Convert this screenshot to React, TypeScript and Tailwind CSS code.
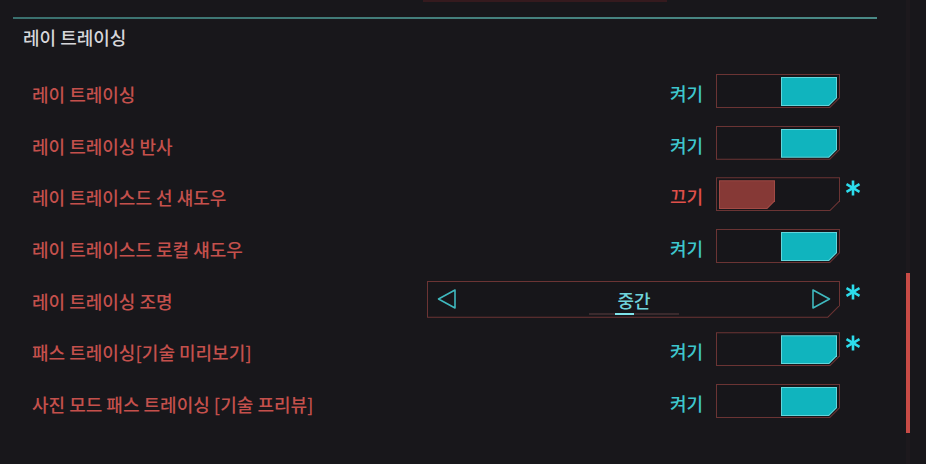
import React from 'react';

const font = { fontFamily: '"Noto Sans CJK KR", "Noto Sans", sans-serif' };

type Row =
  | { label: string; kind: 'toggle'; on: boolean; star?: boolean }
  | { label: string; kind: 'select'; value: string; star?: boolean };

const rows: Row[] = [
  { label: '레이 트레이싱', kind: 'toggle', on: true },
  { label: '레이 트레이싱 반사', kind: 'toggle', on: true },
  { label: '레이 트레이스드 선 섀도우', kind: 'toggle', on: false, star: true },
  { label: '레이 트레이스드 로컬 섀도우', kind: 'toggle', on: true },
  { label: '레이 트레이싱 조명', kind: 'select', value: '중간', star: true },
  { label: '패스 트레이싱[기술 미리보기]', kind: 'toggle', on: true, star: true },
  { label: '사진 모드 패스 트레이싱 [기술 프리뷰]', kind: 'toggle', on: true },
];

function Star() {
  return (
    <svg
      className="absolute left-full top-[3px] ml-[5px]"
      width="16"
      height="16"
      viewBox="0 0 16 16"
      stroke="#2ddcec"
      strokeWidth="2.6"
      strokeLinecap="butt"
    >
      <line x1="8" y1="0.5" x2="8" y2="15.5" />
      <line x1="1.5" y1="4.2" x2="14.5" y2="11.8" />
      <line x1="1.5" y1="11.8" x2="14.5" y2="4.2" />
    </svg>
  );
}

function Toggle({ on }: { on: boolean }) {
  return (
    <div className="w-[124px] h-[34px] p-px bg-[#6b3434] [clip-path:polygon(0_0,100%_0,100%_calc(100%-10px),calc(100%-10px)_100%,0_100%)]">
      <div
        className={
          'w-full h-full flex p-[2px] pb-[1px] bg-[#17161a] [clip-path:polygon(0_0,100%_0,100%_calc(100%-9.5px),calc(100%-9.5px)_100%,0_100%)] ' +
          (on ? 'justify-end' : 'justify-start')
        }
      >
        <div
          className={
            'w-[56px] h-full p-px [clip-path:polygon(0_0,100%_0,100%_calc(100%-8px),calc(100%-8px)_100%,0_100%)] ' +
            (on ? 'bg-[#63d6dc]' : 'bg-[#a14a45]')
          }
        >
          <div
            className={
              'w-full h-full [clip-path:polygon(0_0,100%_0,100%_calc(100%-7.5px),calc(100%-7.5px)_100%,0_100%)] ' +
              (on ? 'bg-[#10b4be]' : 'bg-[#863936]')
            }
          />
        </div>
      </div>
    </div>
  );
}

function Selector({ value }: { value: string }) {
  return (
    <div className="w-[413px] h-[37px] p-px bg-[#6b3434] [clip-path:polygon(0_0,100%_0,100%_calc(100%-12px),calc(100%-12px)_100%,0_100%)]">
      <div className="w-full h-full flex items-center justify-between pl-[9px] pr-[8px] bg-[#17161a] [clip-path:polygon(0_0,100%_0,100%_calc(100%-11.5px),calc(100%-11.5px)_100%,0_100%)]">
        <svg width="20" height="22" viewBox="0 0 20 22" fill="none" stroke="#3fb8be" strokeWidth="1.6" strokeLinejoin="round">
          <polygon points="1.5,11 18,2 18,20" />
        </svg>
        <div className="flex flex-col items-center pt-[5px]">
          <span className="text-[18px] leading-[23px] font-medium text-[#6fd3da]">{value}</span>
          <div className="mt-[1px] w-[90px] h-[2px] bg-[#3a2a2d] flex pl-[26px]">
            <div className="w-[19px] h-[2px] bg-[#7fe3ea]" />
          </div>
        </div>
        <svg width="20" height="22" viewBox="0 0 20 22" fill="none" stroke="#3fb8be" strokeWidth="1.6" strokeLinejoin="round">
          <polygon points="18.5,11 2,2 2,20" />
        </svg>
      </div>
    </div>
  );
}

export default function App() {
  return (
    <div className="w-[926px] h-[464px] bg-[#18171b] flex overflow-hidden" style={font}>
      <div className="w-[906px] flex flex-col pl-[13px]">
        <div className="ml-[410px] w-[244px] h-[2px] bg-[#351a1e]" />
        <div className="mt-[15px] w-[864px] h-[2px] bg-gradient-to-r from-[#3a706e] via-[#447f7c] to-[#4a8a87]" />
        <div className="mt-[6px] pl-[10px] text-[18px] leading-[24px] font-medium text-[#d6d6da]">레이 트레이싱</div>
        <div className="mt-[25px] pl-[19px] w-[827px] flex flex-col">
          {rows.map((r) => (
            <div key={r.label} className="h-[51.67px] flex items-start justify-between">
              <span className="text-[18px] leading-[40px] font-medium text-[#c4504c]">{r.label}</span>
              <div className="relative flex items-start">
                {r.kind === 'toggle' ? (
                  <>
                    <span
                      className={
                        'mr-[13px] text-[18px] leading-[38px] font-medium ' +
                        (r.on ? 'text-[#3ec6cd]' : 'text-[#e0504a]')
                      }
                    >
                      {r.on ? '켜기' : '끄기'}
                    </span>
                    <Toggle on={r.on} />
                  </>
                ) : (
                  <Selector value={r.value} />
                )}
                {r.star && <Star />}
              </div>
            </div>
          ))}
        </div>
      </div>
      <div className="w-[4px] h-full bg-[#1d191d] flex flex-col">
        <div className="mt-[273px] h-[160px] w-full bg-[#c84b46]" />
      </div>
    </div>
  );
}
